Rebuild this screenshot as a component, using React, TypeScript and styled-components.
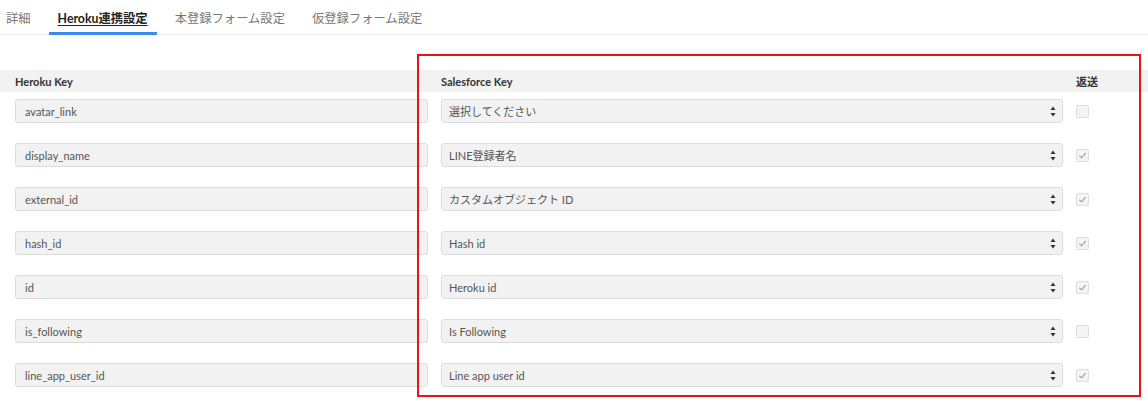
import { createGlobalStyle, styled } from "styled-components";

const GlobalStyle = createGlobalStyle`
  html, body {
    margin: 0;
    padding: 0;
    background: #fff;
  }
  body {
    font-family: Lato, "Noto Sans CJK JP", sans-serif;
    color: #333;
  }
`;

type Mapping = {
  heroku: string;
  salesforce: string;
  send: boolean;
};

const rows: Mapping[] = [
  { heroku: "avatar_link", salesforce: "選択してください", send: false },
  { heroku: "display_name", salesforce: "LINE登録者名", send: true },
  { heroku: "external_id", salesforce: "カスタムオブジェクト ID", send: true },
  { heroku: "hash_id", salesforce: "Hash id", send: true },
  { heroku: "id", salesforce: "Heroku id", send: true },
  { heroku: "is_following", salesforce: "Is Following", send: false },
  { heroku: "line_app_user_id", salesforce: "Line app user id", send: true },
];

const tabs = ["詳細", "Heroku連携設定", "本登録フォーム設定", "仮登録フォーム設定"];

const App = () => {
  return (
    <Page>
      <GlobalStyle />
      <TabBar>
        {tabs.map((t, i) => (
          <Tab key={t} $active={i === 1}>
            {t}
          </Tab>
        ))}
      </TabBar>
      <Body>
        <HeaderRow>
          <HeaderCell>Heroku Key</HeaderCell>
          <HeaderCell>Salesforce Key</HeaderCell>
          <HeaderCell>返送</HeaderCell>
        </HeaderRow>
        <Rows>
          {rows.map((r) => (
            <Row key={r.heroku}>
              <Field>{r.heroku}</Field>
              <SelectBox>
                <span>{r.salesforce}</span>
                <Arrows>
                  <svg width="6" height="11" viewBox="0 0 6 11">
                    <path d="M3 0.5 L5.5 4 L0.5 4 Z" fill="#333" />
                    <path d="M3 10.5 L5.5 7 L0.5 7 Z" fill="#333" />
                  </svg>
                </Arrows>
              </SelectBox>
              <CheckCell>
                <Check>
                  {r.send && (
                    <svg width="9" height="9" viewBox="0 0 9 9">
                      <path
                        d="M1.5 4.8 L3.6 6.8 L7.6 2.2"
                        fill="none"
                        stroke="#999"
                        strokeWidth="1.1"
                      />
                    </svg>
                  )}
                </Check>
              </CheckCell>
            </Row>
          ))}
        </Rows>
        <Highlight />
      </Body>
    </Page>
  );
};

export default App;

const Page = styled.div`
  width: 1148px;
  height: 411px;
  overflow: hidden;
`;

const TabBar = styled.div`
  display: flex;
  gap: 9px;
  height: 34px;
  border-bottom: 1px solid #f0f0f0;
`;

const Tab = styled.div<{ $active?: boolean }>`
  padding: 3px 9px 0;
  display: flex;
  align-items: center;
  font-size: 12.3px;
  color: ${(p) => (p.$active ? "#222" : "#777")};
  font-weight: ${(p) => (p.$active ? 700 : 400)};
  text-decoration: ${(p) => (p.$active ? "underline" : "none")};
  text-underline-offset: 2px;
  border-bottom: 3px solid ${(p) => (p.$active ? "#3b8bea" : "transparent")};
  margin-bottom: -1px;
  &:first-child {
    padding-left: 6px;
  }
`;

const Body = styled.div`
  position: relative;
  padding-top: 35px;
`;

const grid = `
  display: grid;
  grid-template-columns: 413px 622px 1fr;
  column-gap: 13px;
  padding-left: 15px;
`;

const HeaderRow = styled.div`
  ${grid};
  height: 22px;
  align-items: center;
  background: #f2f2f2;
`;

const HeaderCell = styled.div`
  font-size: 11px;
  font-weight: 700;
  color: #333;
`;

const Rows = styled.div`
  display: flex;
  flex-direction: column;
  gap: 20px;
  padding-top: 7px;
`;

const Row = styled.div`
  ${grid};
  height: 24px;
  align-items: center;
`;

const Field = styled.div`
  height: 24px;
  box-sizing: border-box;
  border: 1px solid #dcdcdc;
  border-radius: 3px;
  background: #f2f2f2;
  padding-left: 9px;
  display: flex;
  align-items: center;
  font-size: 11px;
  color: #555;
`;

const SelectBox = styled(Field)`
  justify-content: space-between;
  padding-right: 6px;
  padding-left: 7px;
`;

const Arrows = styled.span`
  display: flex;
  align-items: center;
`;

const CheckCell = styled.div`
  display: flex;
  align-items: center;
`;

const Check = styled.div`
  width: 13px;
  height: 13px;
  box-sizing: border-box;
  border: 1px solid #dddddd;
  border-radius: 2px;
  background: #f4f4f4;
  display: flex;
  align-items: center;
  justify-content: center;
`;

const Highlight = styled.div`
  position: absolute;
  left: 417px;
  top: 19px;
  width: 724px;
  height: 343px;
  box-sizing: border-box;
  border: 2px solid #e8131c;
  pointer-events: none;
`;
